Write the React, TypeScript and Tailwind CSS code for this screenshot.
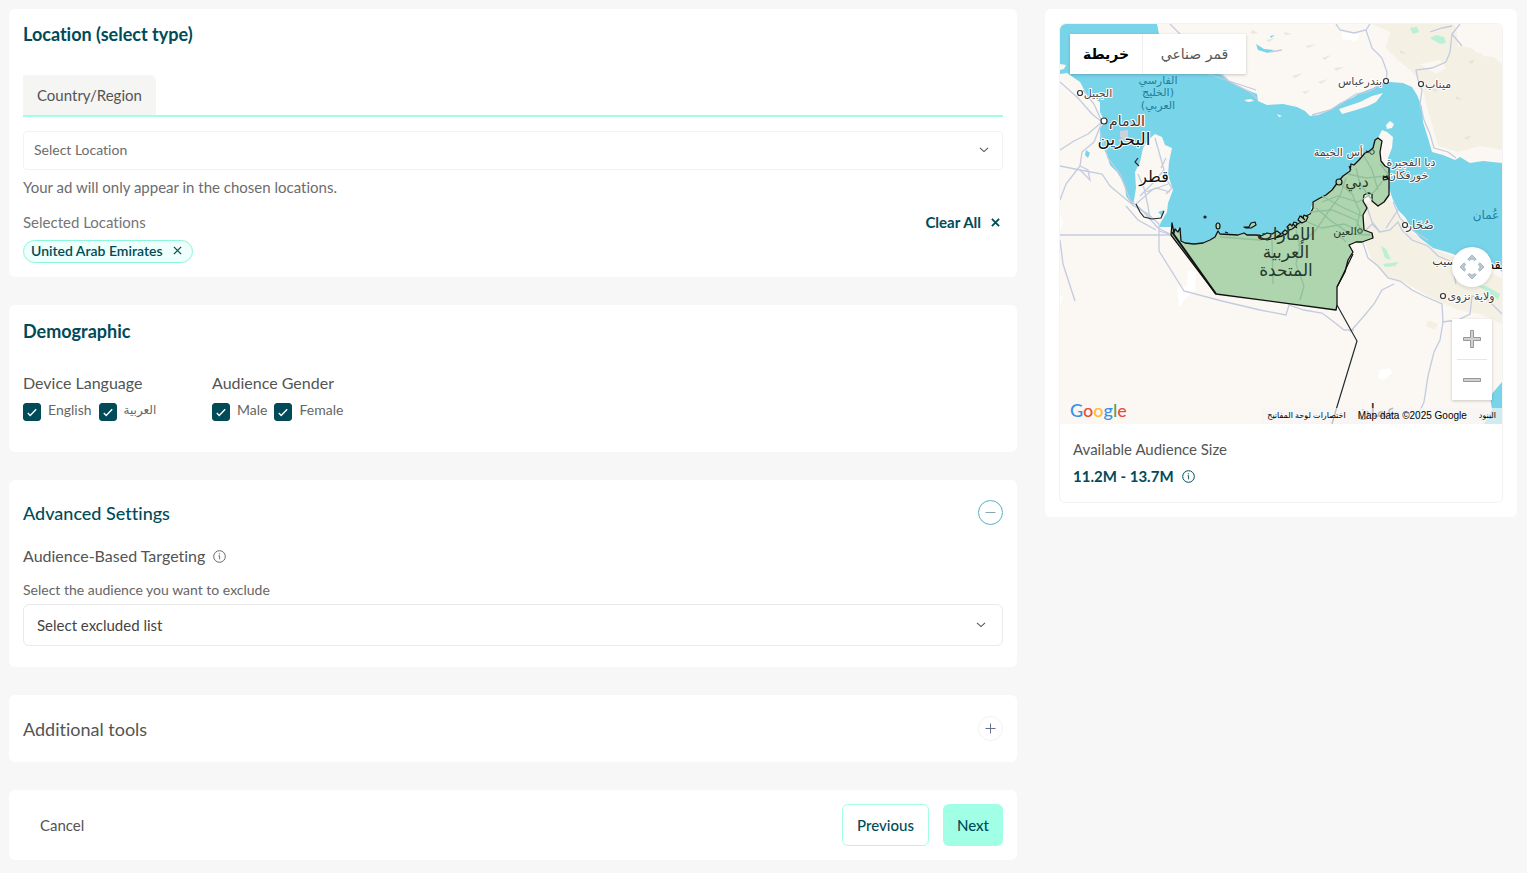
import { useState, type ReactNode } from "react";
import clsx from "clsx";

const languages = [
  { id: "lang-en", label: "English" },
  { id: "lang-ar", label: "العربية", small: true },
];

const genders = [
  { id: "gender-male", label: "Male" },
  { id: "gender-female", label: "Female" },
];

const roads = [
  // Saudi coast
  "M0 58L18 74L32 90L42 98L28 110L14 117L0 126",
  "M42 98L34 118L22 128L20 142L6 160L0 176",
  "M0 142L20 146L42 150L50 162L62 172L74 182L88 190L99 200V227L124 267L162 277L200 286L226 291L229 281L244 286L262 289L274 298L284 306L294 306",
  "M20 146L30 156L28 146L20 142M40 108L48 134L60 150L70 176L82 186L98 204L112 211",
  "M0 211H110M0 216L3 240L15 277M99 207L109 210M23 66L34 80L42 98",
  "M66 182L78 196L96 206",
  // Qatar
  "M95 114L99 128L104 146L92 160L80 172M78 150L84 164L88 182L90 196M86 168L96 164L110 168M104 152L112 164L106 170M106 134L101 144M76 180L92 166L108 160",
  // Iran
  "M110 0L140 30L170 58L190 68L198 76M148 50L196 66",
  "M276 0L280 6L294 9L306 6L310 0M306 6L312 24L322 34L327 48L326 58L308 68L296 70L282 79L270 86L252 91",
  "M400 0L392 10L390 28L386 38L372 44L356 46L358 56L362 66L360 80L364 96L370 110L374 124L388 128L396 134",
  "M392 10L402 22M370 8L382 4L392 2M210 28L222 26",
  // Oman
  "M306 180L312 198L320 208L330 206L338 198L342 206L352 216L368 222L378 232L392 238",
  "M302 216L308 234L318 242L328 254L340 257L352 266L364 272L382 280L383 298L380 316L374 328L368 352L364 378L356 396",
  "M334 260L322 266L314 280L304 292L290 308M320 208L312 200L306 206M333 178L340 194L352 206L368 216",
  "M382 298L398 296L410 290L412 272L428 276L442 290M396 260L394 250L402 240M338 186L326 204",
];

const emirateRoads = [
  "M262 178L278 172L298 178L314 168L328 150L320 140M250 188L272 186L296 196L302 208M243 196L262 204L284 200L302 208",
  "M278 158L292 170L300 188L296 206M296 144L300 160L312 176M288 150L306 154L326 152M304 132L312 146L318 166",
  "M256 184L270 196L290 210L310 211M236 206L240 222L236 240L244 262L240 276M243 198L228 208L200 216L160 213M212 216L213 260",
  "M286 154L280 172L268 188L256 206L238 222M278 210L286 218M262 172L284 184L302 192",
];

const peaks =
  "M192 6l6 3l-7 1zM206 16l9-2l-6 4zM224 8l8 2l-7 1zM246 22l10-2l-8 4zM262 34l9-3l-6 5zM232 52l11-3l-8 5zM258 58l10-3l-7 5zM274 44l10-1l-8 4zM286 60l10-3l-7 5zM340 26l6 4l-6-1zM408 38l7-3l-3 5zM396 72l7 4l-7-1zM372 66l7-3l-3 5zM404 114l7-3l-3 5zM242 68l8-2l-5 4z";

const mapLabels = [
  { text: "الفارسي", x: 98, y: 60, size: 11, fill: "#1f7f9c" },
  { text: "(الخليج", x: 98, y: 72, size: 11, fill: "#1f7f9c" },
  { text: "العربي)", x: 98, y: 85, size: 11, fill: "#1f7f9c" },
  { text: "الجبيل", x: 38, y: 73, size: 11, fill: "#444" },
  { text: "الدمام", x: 67, y: 102, size: 14, fill: "#333" },
  { text: "البحرين", x: 64, y: 121, size: 17, fill: "#111" },
  { text: "قطر", x: 94, y: 158, size: 16, fill: "#111" },
  { text: "بندرعباس", x: 300, y: 61, size: 11, fill: "#444" },
  { text: "ميناب", x: 378, y: 64, size: 11, fill: "#444" },
  { text: "رأس الخيمة", x: 281, y: 132, size: 11, fill: "#444" },
  { text: "دبا الفجيرة", x: 351, y: 142, size: 11, fill: "#444" },
  { text: "خورفكان", x: 348, y: 155, size: 11, fill: "#444" },
  { text: "صُحَار", x: 360, y: 205, size: 12, fill: "#444" },
  { text: "عُمان", x: 426, y: 195, size: 12, fill: "#1f7f9c" },
  { text: "سيب", x: 384, y: 241, size: 11, fill: "#333" },
  { text: "مسقط", x: 441, y: 245, size: 13, fill: "#111" },
  { text: "ولاية نزوى", x: 411, y: 276, size: 11, fill: "#444" },
  { text: "عمان", x: 317, y: 393, size: 18, fill: "#333" },
];

const emirateLabels = [
  { text: "دبي", x: 297, y: 163, size: 15 },
  { text: "العين", x: 285, y: 211, size: 11 },
  { text: "الإمارات", x: 226, y: 216, size: 17 },
  { text: "العربية", x: 226, y: 234, size: 17 },
  { text: "المتحدة", x: 226, y: 252, size: 17 },
];

const towns = [
  { x: 20, y: 69, r: 2.5 },
  { x: 44, y: 97, r: 3 },
  { x: 326, y: 57, r: 2.5 },
  { x: 361, y: 60, r: 2.5 },
  { x: 345, y: 201, r: 2.5 },
  { x: 383, y: 272, r: 2.5 },
];

const emiratesPath =
  "M318 114L315 116L313 124L308 128L305 129L299 136L294 141L291 140L290 147L283 152L278 158L272 166L266 171L260 174L253 178L253 184L250 190L246 192L243 197L236 201L231 205L222 212L214 214L208 215L203 212L196 211L187 211L184 209L178 211L160 210L158 207L155 213L150 216L143 219L134 220L125 219L121 217L120 204L118 208L115 205L114 209L112 199L111 211L156 270L276 286L277 281V263L285 248L288 236L293 228L289 221L296 218L302 218L313 214L312 209L304 206L303 191L307 184L303 177L304 171L308 169L312 170L312 177L318 182L324 178L329 171V144L325 142L321 137L320 128L322 117Z";

function Card({ children, className }: { children: ReactNode; className?: string }) {
  return <section className={clsx("rounded-md bg-white px-3.5", className)}>{children}</section>;
}

function Chevron({ className }: { className?: string }) {
  return (
    <svg className={clsx("pointer-events-none absolute", className)} width="10" height="6" viewBox="0 0 10 6" fill="none" stroke="#555" strokeWidth="1.1">
      <path d="M1 .8L5 4.6L9 .8" />
    </svg>
  );
}

function Cross({ size, strokeWidth }: { size: number; strokeWidth: number }) {
  return (
    <svg width={size} height={size} viewBox="0 0 10 10" stroke="#004b57" strokeWidth={strokeWidth}>
      <path d="M1 1L9 9M9 1L1 9" />
    </svg>
  );
}

function InfoIcon({ color }: { color: string }) {
  return (
    <svg width="13" height="13" viewBox="0 0 13 13" fill="none" stroke={color}>
      <circle cx="6.5" cy="6.5" r="5.8" />
      <path d="M5.5 5.7H6.6V9.4" strokeWidth=".9" />
      <circle cx="6.4" cy="3.8" r=".4" fill={color} strokeWidth=".5" />
    </svg>
  );
}

function CheckItem({ id, label, small }: { id: string; label: string; small?: boolean }) {
  return (
    <div className="flex items-start gap-[7px]">
      <span className="mt-[3px] grid size-[18px] place-items-center">
        <input id={id} type="checkbox" defaultChecked className="peer col-start-1 row-start-1 size-[18px] appearance-none rounded-[3px] border border-[#004b57] checked:bg-[#004b57]" />
        <svg className="pointer-events-none col-start-1 row-start-1 hidden peer-checked:block" width="10" height="9" viewBox="0 0 10 9" fill="none" stroke="#fff" strokeWidth="1.4">
          <path d="M.8 5L3.2 7.4L9.2 1.2" />
        </svg>
      </span>
      <label htmlFor={id} className={clsx("leading-5 text-[#666]", small ? "text-xs leading-5" : "text-sm leading-5")}>
        {label}
      </label>
    </div>
  );
}

function LocationMap() {
  return (
    <div className="relative h-[400px] overflow-hidden rounded-t-md">
      <svg className="h-full w-full" viewBox="0 0 442 400" preserveAspectRatio="xMidYMid slice" fontFamily='"DejaVu Sans", sans-serif'>
        <rect width="442" height="400" fill="#fbf8f3" />
        {/* Terrain */}
        <path fill="#f4f0e4" d="M312 0L330 8L326 24L338 36L350 46L362 60L366 80L372 100L378 122L398 128L420 122L442 126V40L430 30L416 28L404 18L394 0Z" />
        <path fill="#fbf8f3" d="M396 0H442V34L424 32L412 24L398 22ZM360 40L376 50L386 44L380 36Z" />
        <path fill="#f4f0e4" d="M307 178L330 176L346 204L372 224L410 240L442 254V300L420 290L398 286L372 274L344 258L326 252L312 236L304 216ZM368 296L378 300L374 306L366 302Z" />
        <path fill="#b9f0d6" d="M350 4l7-1l2 5l-6 2zM370 14l6-3l8 2l2 6l-6 1zM321 222l5 3l5 11l-6-2zM418 262l8 0l14 8l-2 6l-10-8zM323 240l16-2l-4 4l-10 1z" />
        <path fill="#fff" d="M282 8l18 2l-4 7l-14-2zM128 247l8 1l-1 18l-9 8l-7 10l-2-20l10-2zM320 346l10-2l2 5l-8 7l-6-2zM0 190l3 8l-3 8zM0 270l3 4l-3 8z" />
        <path fill="#e2ded4" opacity=".7" d={peaks} />
        {/* Water */}
        <path
          fill="#78d4e9"
          d="M0 0H97L99 10L126 28L150 46L160 50L172 59L187 66L197 70L198 77L207 81L223 80L237 83L245 87L250 92L258 91L270 86L280 79L292 74L300 69L313 64L322 59L330 58L343 59L352 63L357 71L362 83L363 98L368 114L372 128L383 131L395 136L400 133L410 139L423 137L442 139V248L433 239L410 236L390 229L373 224L360 214L353 206L345 193L338 186L333 176L329 164V144L328 134L332 124L333 113L327 108L322 106L318 114L313 124L305 129L292 143L278 158L266 171L253 178L250 188L243 196L233 204L220 213L203 213L187 211L160 210L155 213L143 219L125 219L120 217L118 204L115 209L112 199L111 203H99L101 198L107 188L108 179L113 166L108 151L109 138L112 124L105 121L102 113L95 110L88 116L83 124L80 138L75 148L76 164L73 182L66 172L65 161L57 148L50 141L47 131L40 118V104L45 98L40 88V78L27 71L20 58L7 49L0 50Z"
        />
        <path fill="#78d4e9" d="M430 372L442 358V400H424L432 386ZM26 126l4 3l-2 5l-3-3zM196 20l8 5l10 1l-6 3l-10-3zM210 12l5-1l-4 3zM98 188l6-2l-2 6z" />
        <path fill="#fbf8f3" d="M279 85L300 78L312 72L323 69L316 78L308 82L296 86L282 90ZM326 101l4-4l4 3l-2 4l-5 1zM184 76l7-1l3 2l-6 1zM217 90l5 2l-3 1zM0 40l6 1l-2 4l-4 1z" />
        <path fill="#cfd0dc" d="M60 107l8-1v8l-5 2l-3-3z" />
        <g fill="none" stroke="#c3cbe0" strokeWidth="1.3">
          {roads.map((d) => (
            <path key={d} d={d} />
          ))}
        </g>
        <path fill="none" stroke="#222c30" strokeWidth="1.2" d="M76 180L80 188L84 193L92 195L101 194L104 187M78 134l-3 4l4 4M277 281L297 317L276 386L272 400" />
        <g fill="#fff" stroke="#333" strokeWidth="1.2">
          {towns.map((town) => (
            <circle key={`${town.x}-${town.y}`} cx={town.x} cy={town.y} r={town.r} />
          ))}
        </g>
        <g textAnchor="middle" direction="rtl" strokeWidth="2" strokeLinejoin="round" paintOrder="stroke">
          {mapLabels.map((label) => (
            <text key={label.text} x={label.x} y={label.y} fontSize={label.size} fill={label.fill} stroke={label.fill === "#1f7f9c" ? "none" : "#fff"}>
              {label.text}
            </text>
          ))}
        </g>
        {/* Emirates */}
        <path fill="#afd5ae" stroke="#111" strokeWidth="1.3" strokeLinejoin="round" d={emiratesPath} />
        <path fill="none" stroke="#111" strokeWidth="2" d="M112 208L156 270" />
        <g fill="none" stroke="#8fbf9c" strokeWidth="1.3">
          {emirateRoads.map((d) => (
            <path key={d} d={d} />
          ))}
        </g>
        {/* Islands and harbours */}
        <g fill="#afd5ae" stroke="#111" strokeWidth="1.2" strokeLinejoin="round">
          <circle cx="145" cy="193" r="1" />
          <ellipse cx="158" cy="202" rx="2" ry="3" />
          <path d="M184 203l5 0l2-4l4-1l1 3l-5 3l-5 0zM227 203l3-3l2 2l2-4l3 1l-1 3l-4 3l-3 1zM238 196l2-4l3 2l1-3l4 2l-2 4l-4 2zM199 213l8-4l5 1l5-3l4 3l-6 4l-8 2zM222 209l3-3l3 2l-3 3zM323 154l4-2l1 3l-4 1zM165 208l3 1" />
          <path fill="none" d="M277 263L293 230M289 142l2 4M306 127l3 1M323 152l6 3M233 200l4 4M241 192l4 4" />
          <circle cx="279" cy="158" r="3" />
        </g>
        <g fill="none" stroke="#2f4a34">
          <circle cx="300" cy="207" r="2.3" />
          <circle cx="312" cy="128" r="2.3" />
        </g>
        <g textAnchor="middle" direction="rtl" fill="#26382b">
          {emirateLabels.map((label) => (
            <text key={label.text} x={label.x} y={label.y} fontSize={label.size}>
              {label.text}
            </text>
          ))}
        </g>
      </svg>

      {/* Map type */}
      <div className="absolute top-2.5 left-2.5 flex h-10 bg-white font-['DejaVu_Sans',sans-serif] text-sm shadow-[0_1px_3px_rgba(0,0,0,0.2)]">
        <button className="w-[73px] border-r border-[#eee] font-bold text-black">خريطة</button>
        <button className="w-[103px] text-[#565656]">قمر صناعي</button>
      </div>

      <button aria-label="Pan map" className="absolute right-2.5 bottom-[137px] grid size-10 place-items-center rounded-full bg-white shadow-[0_1px_4px_rgba(0,0,0,0.15)]">
        <svg width="26" height="26" viewBox="0 0 26 26" fill="#b5cbd6" stroke="#98a8b0" strokeWidth=".8">
          {[0, 90, 180, 270].map((angle) => (
            <path key={angle} transform={`rotate(${angle} 13 13)`} d="M13 1L17.2 5.2L15.8 6.6L13 4.8L10.2 6.6L8.8 5.2Z" />
          ))}
        </svg>
      </button>

      <div className="absolute right-2.5 bottom-6 flex w-10 flex-col items-center bg-white shadow-[0_1px_3px_rgba(0,0,0,0.2)]">
        <button aria-label="Zoom in" className="grid h-10 w-full place-items-center">
          <svg width="18" height="18" viewBox="0 0 18 18" fill="#d0d0d0" stroke="#999">
            <path d="M7.5 .5H10.5V7.5H17.5V10.5H10.5V17.5H7.5V10.5H.5V7.5H7.5Z" />
          </svg>
        </button>
        <span className="h-px w-[30px] bg-[#e6e6e6]" />
        <button aria-label="Zoom out" className="grid h-10 w-full place-items-center">
          <svg width="18" height="4" viewBox="0 0 18 4" fill="#d0d0d0" stroke="#999">
            <path d="M.5 .5H17.5V3.5H.5Z" />
          </svg>
        </button>
      </div>

      <div className="absolute bottom-0.5 left-2.5 font-['Lato',sans-serif] text-lg leading-6 font-medium text-[#3a8fe8]">
        G<span className="text-[#ea4e3d]">o</span>
        <span className="text-[#fbc02d]">o</span>g<span className="text-[#4fa062]">l</span>
        <span className="text-[#ea4e3d]">e</span>
      </div>

      <div className="absolute right-0 bottom-0 flex h-4 items-center bg-[#f5f5f5]/70 font-['Liberation_Sans','DejaVu_Sans',sans-serif] text-[10px] text-black">
        <button className="px-1.5 text-[8px]">اختصارات لوحة المفاتيح</button>
        <span className="px-1.5">Map data ©2025 Google</span>
        <a href="#" className="px-1.5 text-[8px]">
          البنود
        </a>
      </div>
    </div>
  );
}

export default function App() {
  const [selected, setSelected] = useState(["United Arab Emirates"]);

  return (
    <div className="min-h-screen bg-[#f7f7f7] pt-[9px] pr-2.5 pb-[13px] pl-[9px] font-['Lato','DejaVu_Sans',sans-serif] text-[15px] leading-5 text-[#545454] [font-variant-ligatures:no-common-ligatures]">
      <div className="grid grid-cols-[minmax(0,126fr)_minmax(0,59fr)] items-start gap-7">
        <main className="flex flex-col gap-7">
          {/* Location */}
          <Card className="pt-3.5 pb-3.5">
            <h2 className="text-lg leading-[22px] font-bold text-[#004b57]">Location (select type)</h2>
            <div className="mt-[30px] border-b-2 border-[#a1ffe6]">
              <button className="h-10 rounded-tr-md bg-[#f5f5f3] px-3.5">Country/Region</button>
            </div>
            <div className="relative mt-3.5">
              <select aria-label="Select Location" className="h-[39px] w-full appearance-none rounded border border-[#f3f3f3] bg-white px-2.5 pb-0.5 text-sm text-[#6c6c6c]">
                <option>Select Location</option>
              </select>
              <Chevron className="top-4 right-3.5" />
            </div>
            <p className="mt-[7px] text-[#6c6c6c]">Your ad will only appear in the chosen locations.</p>
            <div className="mt-[15px] flex items-center justify-between">
              <span className="text-[#757575]">Selected Locations</span>
              <button onClick={() => setSelected([])} className="flex items-center gap-2.5 pr-[3px] text-[15px] font-bold text-[#004b57]">
                Clear All
                <Cross size={9} strokeWidth={2} />
              </button>
            </div>
            <div className="mt-2 flex gap-2">
              {selected.map((name) => (
                <span key={name} className="flex h-[23px] items-center gap-2.5 rounded-full border border-[#8df5d9] bg-[#effffb] pr-2.5 pb-0.5 pl-[7px] text-sm font-semibold text-[#004b57]">
                  {name}
                  <button aria-label={`Remove ${name}`} onClick={() => setSelected(selected.filter((item) => item !== name))}>
                    <Cross size={9} strokeWidth={1.4} />
                  </button>
                </span>
              ))}
            </div>
          </Card>

          {/* Demographic */}
          <Card className="pt-3.5 pb-[31px]">
            <h2 className="text-lg leading-6 font-bold text-[#004b57]">Demographic</h2>
            <div className="mt-[30px] flex">
              <fieldset className="w-[189px]">
                <legend className="text-base leading-5">Device Language</legend>
                <div className="mt-[7px] flex gap-[7px]">
                  {languages.map((item) => (
                    <CheckItem key={item.id} {...item} />
                  ))}
                </div>
              </fieldset>
              <fieldset>
                <legend className="text-base leading-5">Audience Gender</legend>
                <div className="mt-[7px] flex gap-[7px]">
                  {genders.map((item) => (
                    <CheckItem key={item.id} {...item} />
                  ))}
                </div>
              </fieldset>
            </div>
          </Card>

          {/* Advanced settings */}
          <Card className="pt-5 pb-[21px]">
            <div className="flex items-center justify-between">
              <h2 className="text-lg leading-6 font-medium text-[#004b57]">Advanced Settings</h2>
              <button aria-label="Collapse advanced settings" className="grid size-[25px] place-items-center rounded-full border border-[#5ab0c4]">
                <svg width="11" height="11" viewBox="0 0 11 11" stroke="#8ba4b8">
                  <path d="M.5 5.5H10.5" />
                </svg>
              </button>
            </div>
            <div className="mt-[21px] flex items-center gap-2 text-base leading-5">
              Audience-Based Targeting
              <InfoIcon color="#666" />
            </div>
            <label htmlFor="excluded" className="mt-3.5 block text-sm leading-5 text-[#666]">
              Select the audience you want to exclude
            </label>
            <div className="relative mt-1">
              <select id="excluded" className="h-[42px] w-full appearance-none rounded-md border border-[#e9e9e9] bg-white px-[13px] text-[15px] text-[#444]">
                <option>Select excluded list</option>
              </select>
              <Chevron className="top-[18px] right-[17px]" />
            </div>
          </Card>

          {/* Additional tools */}
          <Card className="flex items-center justify-between py-[21px]">
            <h2 className="text-lg leading-6">Additional tools</h2>
            <button aria-label="Expand additional tools" className="grid size-[25px] place-items-center rounded-full border border-[#f3f3f3]">
              <svg width="11" height="11" viewBox="0 0 11 11" stroke="#66708f">
                <path d="M.5 5.5H10.5M5.5 .5V10.5" />
              </svg>
            </button>
          </Card>

          <Card className="flex items-center justify-between py-3.5">
            <button className="h-[42px] px-[17px]">Cancel</button>
            <div className="flex gap-3.5 font-medium text-[#004b57]">
              <button className="h-[42px] rounded-md border border-[#a1ffe6] px-3.5">Previous</button>
              <button className="h-[42px] rounded-md bg-[#a1ffe6] px-3.5">Next</button>
            </div>
          </Card>
        </main>

        {/* Audience preview */}
        <aside className="rounded-md bg-white p-3.5">
          <div className="rounded-md border border-[#f3f3f3]">
            <LocationMap />
            <div className="px-[13px] pt-[15px] pb-4">
              <p>Available Audience Size</p>
              <div className="mt-[7px] flex items-center gap-2">
                <strong className="text-[15px] leading-5 text-[#004b57]">11.2M - 13.7M</strong>
                <InfoIcon color="#004b57" />
              </div>
            </div>
          </div>
        </aside>
      </div>
    </div>
  );
}
